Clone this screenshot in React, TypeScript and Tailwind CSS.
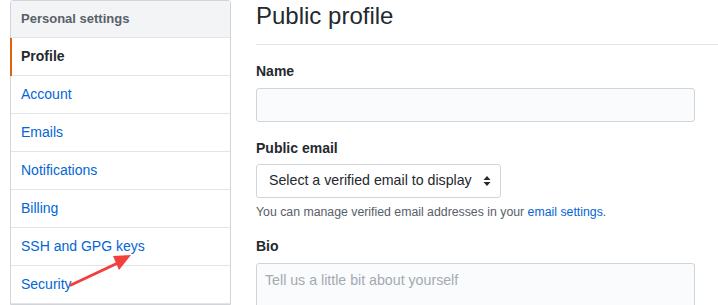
import React from 'react';

const menu = ['Account', 'Emails', 'Notifications', 'Billing', 'SSH and GPG keys', 'Security'];

const App = () => {
  return (
    <div
      className="relative flex h-[305px] w-[718px] overflow-hidden bg-white pl-[10px] text-[14px] text-[#24292e]"
      style={{ fontFamily: '"Liberation Sans", Arial, sans-serif' }}
    >
      <nav className="w-[221px] shrink-0 self-start rounded-t-[3px] border border-[#d1d5da]">
        <h3 className="h-[37px] border-b border-[#e1e4e8] bg-[#f3f4f6] px-[10px] text-[13px] leading-[36px] font-bold text-[#586069]">
          Personal settings
        </h3>
        <a className="relative block h-[38px] border-b border-[#e1e4e8] px-[10px] leading-[37px] font-bold text-[#24292e]">
          <span className="absolute top-0 bottom-[-1px] left-[-1px] w-[2px] bg-[#e36209]" />
          Profile
        </a>
        {menu.map((item) => (
          <a key={item} className="block h-[38px] border-b border-[#e1e4e8] px-[10px] leading-[37px] text-[#0366d6]">
            {item}
          </a>
        ))}
      </nav>

      <main className="ml-[25px] flex-1">
        <div className="h-[45px] border-b border-[#e1e4e8]">
          <h2 className="pt-[1px] text-[24px] leading-[30px] font-normal">Public profile</h2>
        </div>

        <form className="pt-[16px]">
          <label className="block text-[14px] leading-[21px] font-bold">Name</label>
          <div className="mt-[6px] h-[34px] w-[439px] rounded-[3px] border border-[#d1d5da] bg-[#fafbfc]" />

          <label className="mt-[16px] block text-[14px] leading-[21px] font-bold">Public email</label>
          <div className="mt-[5px] flex h-[34px] w-[245px] items-center justify-between rounded-[3px] border border-[#d1d5da] bg-white pr-[9px] pl-[12px]">
            <span className="text-[14.2px]">Select a verified email to display</span>
            <svg width="8" height="12" viewBox="0 0 8 12">
              <path d="M4 1 L7.5 5 H0.5 Z M4 11 L7.5 7 H0.5 Z" fill="#24292e" />
            </svg>
          </div>
          <p className="mt-[5px] text-[12.3px] leading-[18px] text-[#586069]">
            You can manage verified email addresses in your <a className="text-[#0366d6]">email settings</a>.
          </p>

          <label className="mt-[15px] block text-[14px] leading-[21px] font-bold">Bio</label>
          <div className="mt-[6px] h-[60px] w-[439px] rounded-[3px] border border-[#d1d5da] bg-[#fafbfc] px-[8px] pt-[6px] text-[14.2px] text-[#a3aab1]">
            Tell us a little bit about yourself
          </div>
        </form>
      </main>

      <svg className="pointer-events-none absolute top-0 left-0" width="718" height="305">
        <path d="M71 285 L120 262" stroke="#f43f3f" strokeWidth="3" strokeLinecap="round" />
        <path d="M131 255 L113 256 L119 270 Z" fill="#f43f3f" />
      </svg>
    </div>
  );
};

export default App;
